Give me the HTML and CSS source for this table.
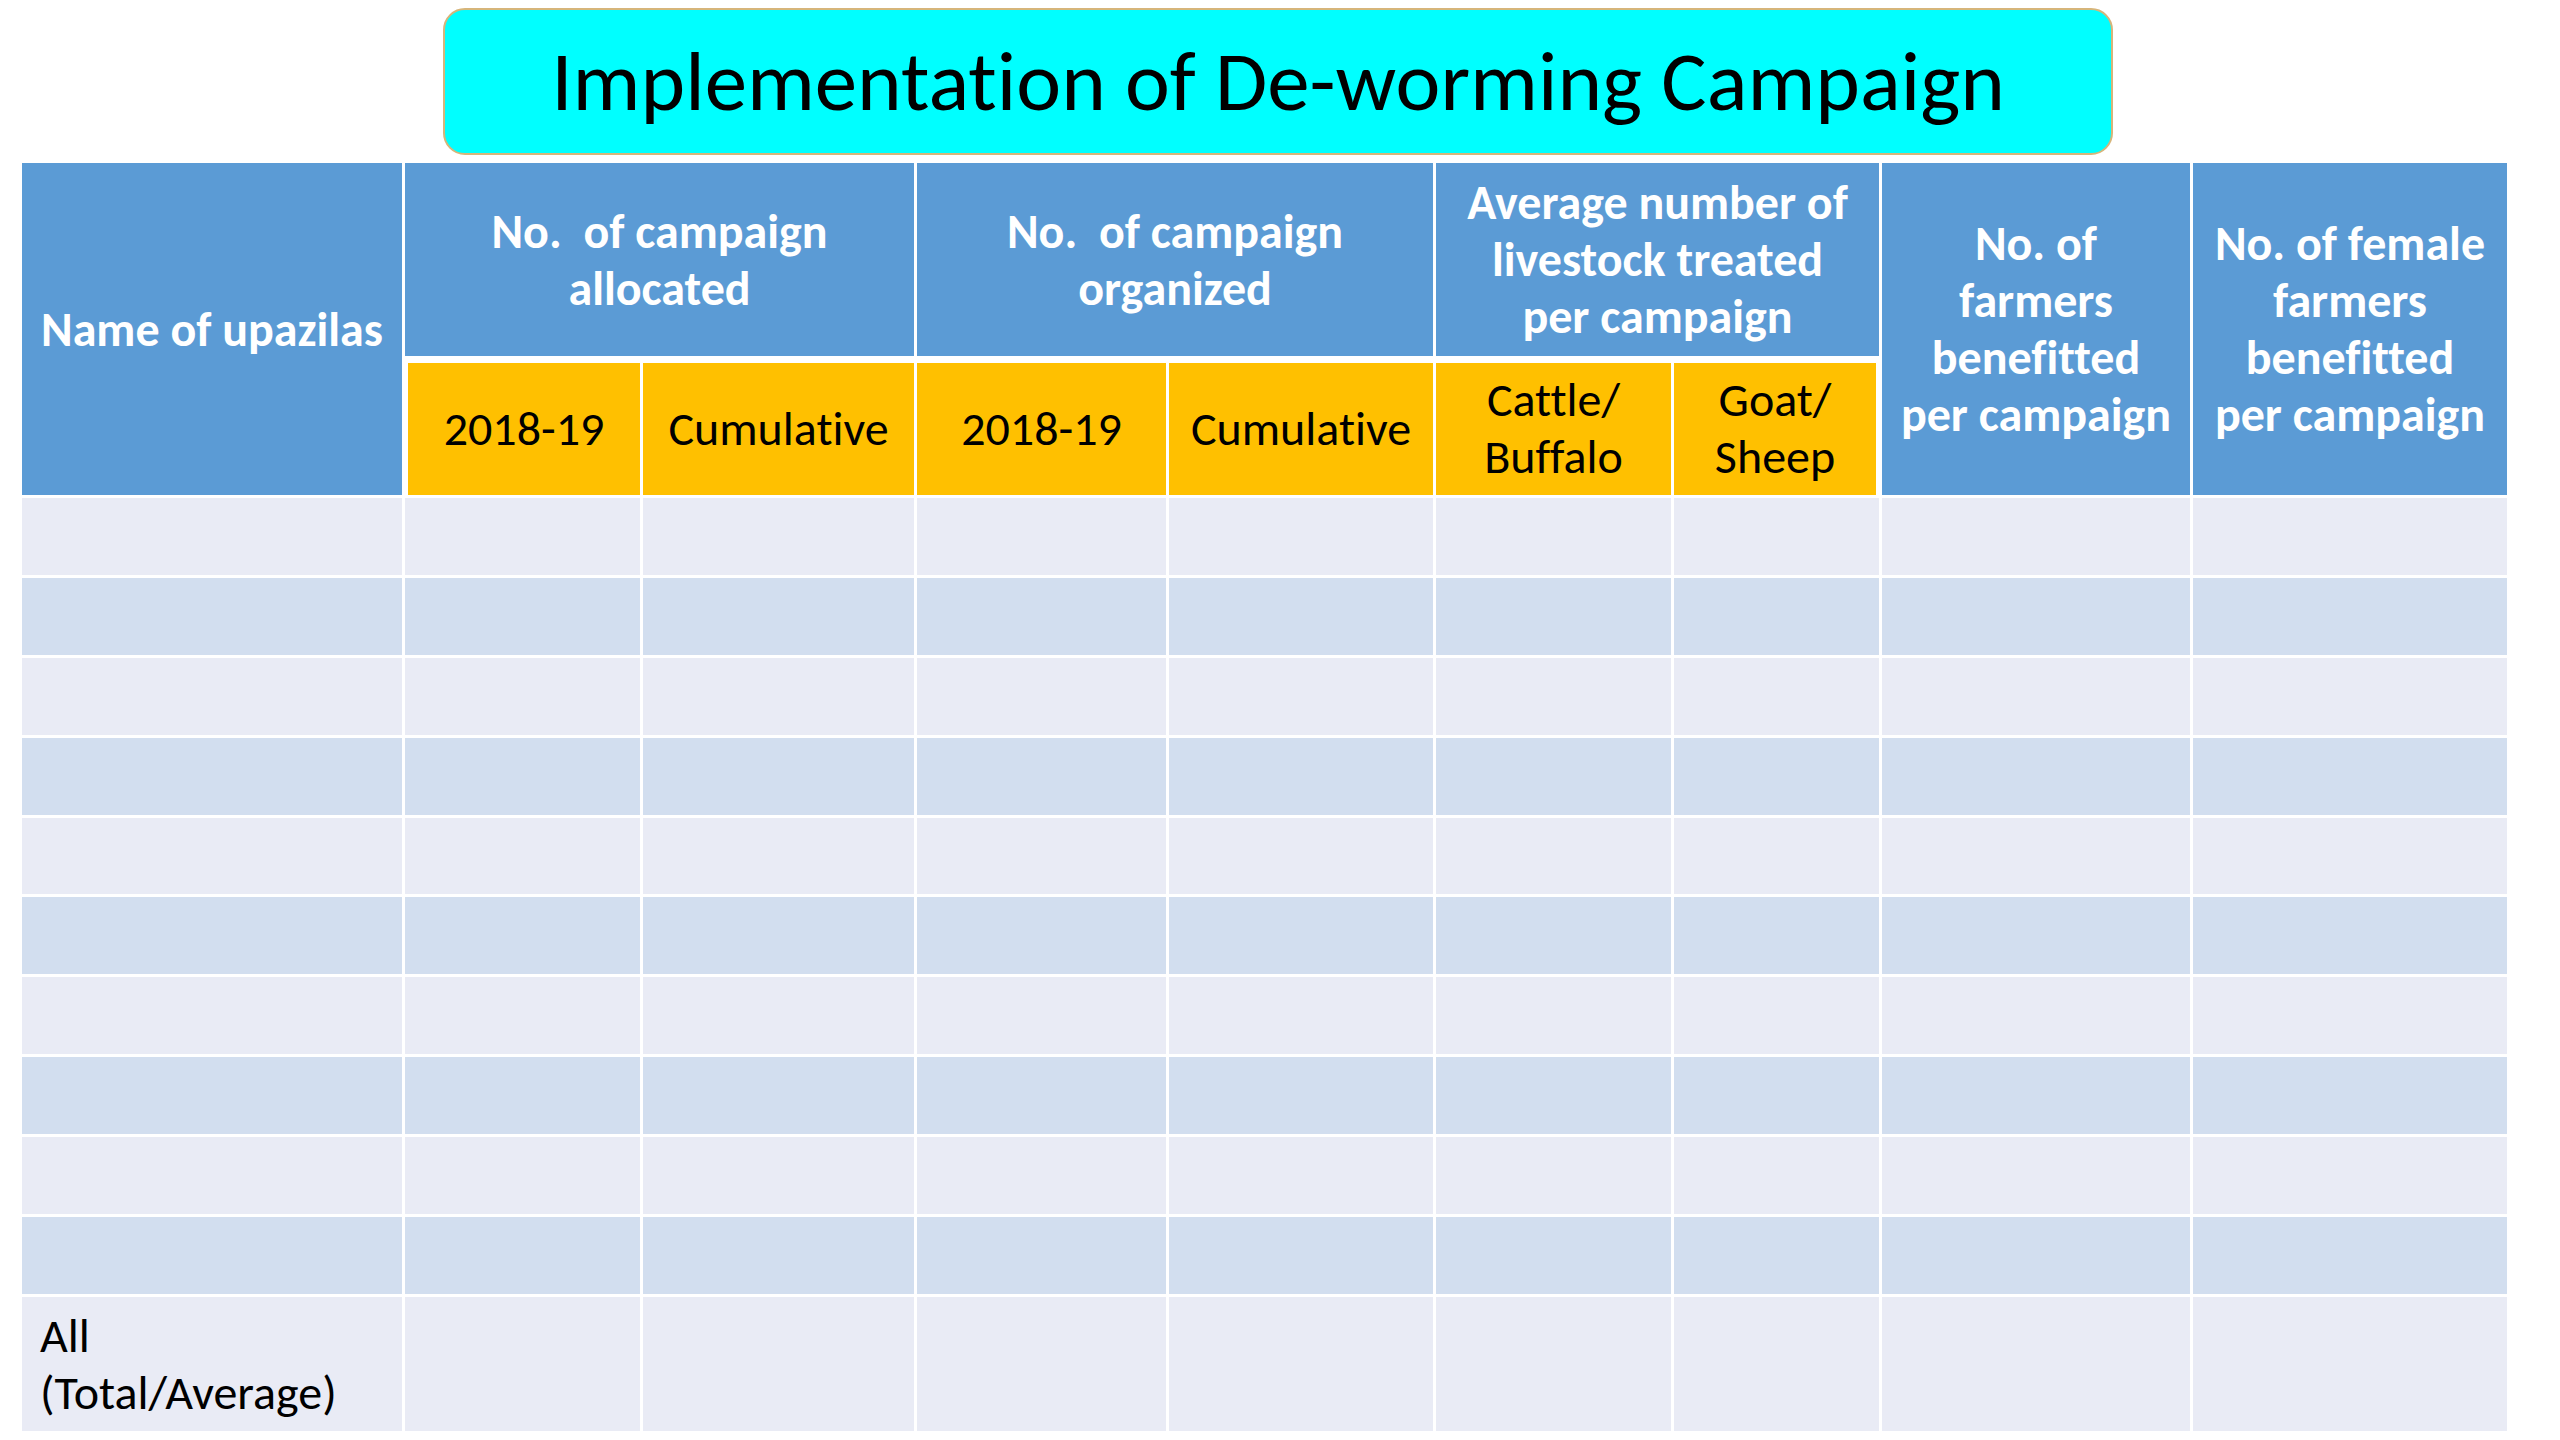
FILE: index.html
```html
<!DOCTYPE html>
<html lang="en">
<head>
<meta charset="utf-8">
<title>Implementation of De-worming Campaign</title>
<link rel="stylesheet" href="styles.css">
</head>
<body>
<div class="page">
  <div class="title-box"><h1 class="title">Implementation of De-worming Campaign</h1></div>
  <div class="grid" role="table">
    <div class="hd c1 span2" role="columnheader">Name of upazilas</div>
    <div class="hd c2 w2" role="columnheader">No.&nbsp; of campaign<br>allocated</div>
    <div class="hd c4 w2" role="columnheader">No.&nbsp; of campaign<br>organized</div>
    <div class="hd c6 w2" role="columnheader">Average number of<br>livestock treated<br>per campaign</div>
    <div class="hd c8 span2" role="columnheader">No. of<br>farmers<br>benefitted<br>per campaign</div>
    <div class="hd c9 span2" role="columnheader">No. of female<br>farmers<br>benefitted<br>per campaign</div>

    <div class="sub c2 first" role="columnheader">2018-19</div>
    <div class="sub c3" role="columnheader">Cumulative</div>
    <div class="sub c4" role="columnheader">2018-19</div>
    <div class="sub c5" role="columnheader">Cumulative</div>
    <div class="sub c6" role="columnheader">Cattle/<br>Buffalo</div>
    <div class="sub c7 last" role="columnheader">Goat/<br>Sheep</div>

    <div class="cell"></div><div class="cell"></div><div class="cell"></div><div class="cell"></div><div class="cell"></div><div class="cell"></div><div class="cell"></div><div class="cell"></div><div class="cell"></div>
    <div class="cell dark"></div><div class="cell dark"></div><div class="cell dark"></div><div class="cell dark"></div><div class="cell dark"></div><div class="cell dark"></div><div class="cell dark"></div><div class="cell dark"></div><div class="cell dark"></div>
    <div class="cell"></div><div class="cell"></div><div class="cell"></div><div class="cell"></div><div class="cell"></div><div class="cell"></div><div class="cell"></div><div class="cell"></div><div class="cell"></div>
    <div class="cell dark"></div><div class="cell dark"></div><div class="cell dark"></div><div class="cell dark"></div><div class="cell dark"></div><div class="cell dark"></div><div class="cell dark"></div><div class="cell dark"></div><div class="cell dark"></div>
    <div class="cell"></div><div class="cell"></div><div class="cell"></div><div class="cell"></div><div class="cell"></div><div class="cell"></div><div class="cell"></div><div class="cell"></div><div class="cell"></div>
    <div class="cell dark"></div><div class="cell dark"></div><div class="cell dark"></div><div class="cell dark"></div><div class="cell dark"></div><div class="cell dark"></div><div class="cell dark"></div><div class="cell dark"></div><div class="cell dark"></div>
    <div class="cell"></div><div class="cell"></div><div class="cell"></div><div class="cell"></div><div class="cell"></div><div class="cell"></div><div class="cell"></div><div class="cell"></div><div class="cell"></div>
    <div class="cell dark"></div><div class="cell dark"></div><div class="cell dark"></div><div class="cell dark"></div><div class="cell dark"></div><div class="cell dark"></div><div class="cell dark"></div><div class="cell dark"></div><div class="cell dark"></div>
    <div class="cell"></div><div class="cell"></div><div class="cell"></div><div class="cell"></div><div class="cell"></div><div class="cell"></div><div class="cell"></div><div class="cell"></div><div class="cell"></div>
    <div class="cell dark"></div><div class="cell dark"></div><div class="cell dark"></div><div class="cell dark"></div><div class="cell dark"></div><div class="cell dark"></div><div class="cell dark"></div><div class="cell dark"></div><div class="cell dark"></div>
    <div class="cell label">All<br>(Total/Average)</div><div class="cell"></div><div class="cell"></div><div class="cell"></div><div class="cell"></div><div class="cell"></div><div class="cell"></div><div class="cell"></div><div class="cell"></div>
  </div>
</div>
</body>
</html>
```
FILE: styles.css
```css
html, body {
  margin: 0;
  padding: 0;
  background: #ffffff;
}
body {
  font-family: Carlito, Lato, "Noto Sans", sans-serif;
  color: #000;
  font-variant-ligatures: none;
}
.page {
  padding: 8px 0 0 22px;
  display: flex;
  flex-direction: column;
  align-items: flex-start;
}
.title-box {
  margin-left: 421px;
  width: 1670px;
  height: 147px;
  box-sizing: border-box;
  background: #00ffff;
  border: 2px solid #d6b57a;
  border-radius: 22px;
  display: flex;
  align-items: center;
  justify-content: center;
  margin-bottom: 8px;
}
.title {
  margin: 0;
  font-weight: 400;
  font-size: 85px;
  line-height: 1;
  white-space: nowrap;
}
.grid {
  display: grid;
  grid-template-columns: 380px 235px 271px 249px 264px 235px 205px 308px 314px;
  grid-template-rows: 193px 136px repeat(10, 76.9px) 134px;
  gap: 3px;
}
.grid > div {
  box-sizing: border-box;
  display: flex;
  align-items: center;
  justify-content: center;
  text-align: center;
  font-size: 48px;
  line-height: 57px;
  white-space: nowrap;
}
.hd {
  background: #5b9bd5;
  color: #ffffff;
  font-weight: 700;
  grid-row: 1;
}
.hd.span2 { grid-row: 1 / span 2; }
.hd.w2 { grid-column-end: span 2; }
.c1 { grid-column-start: 1; }
.c2 { grid-column-start: 2; }
.c3 { grid-column-start: 3; }
.c4 { grid-column-start: 4; }
.c5 { grid-column-start: 5; }
.c6 { grid-column-start: 6; }
.c7 { grid-column-start: 7; }
.c8 { grid-column-start: 8; }
.c9 { grid-column-start: 9; }
.sub {
  grid-row: 2;
  background: #ffc000;
  color: #000;
  border-top: 4px solid #ffffff;
  padding-bottom: 2px;
}
.sub.first { border-left: 3px solid #ffffff; }
.sub.last { border-right: 3px solid #ffffff; }
.cell { background: #e9ebf5; }
.cell.dark { background: #d2deef; }
.grid > .cell.label {
  justify-content: flex-start;
  text-align: left;
  padding-left: 18px;
}
```
